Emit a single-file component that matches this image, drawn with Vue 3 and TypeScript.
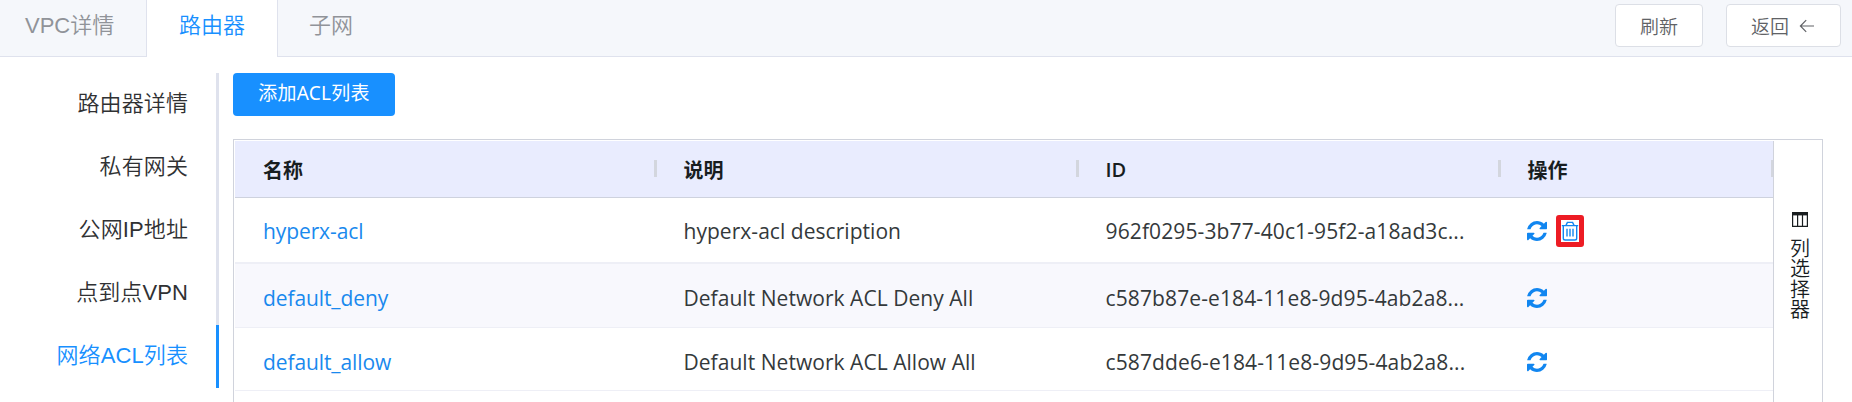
<script setup lang="ts">
interface Tab { label: string; active?: boolean }
interface AclRow { name: string; description: string; id: string; removable: boolean; size: string }

const tabs: Tab[] = [{ label: 'VPC详情' }, { label: '路由器', active: true }, { label: '子网' }]
const menu: Tab[] = [
  { label: '路由器详情' },
  { label: '私有网关' },
  { label: '公网IP地址' },
  { label: '点到点VPN' },
  { label: '网络ACL列表', active: true },
]
const columns: string[] = ['名称', '说明', 'ID', '操作']
const rows: AclRow[] = [
  { name: 'hyperx-acl', description: 'hyperx-acl description', id: '962f0295-3b77-40c1-95f2-a18ad3c...', removable: true, size: 'first' },
  { name: 'default_deny', description: 'Default Network ACL Deny All', id: 'c587b87e-e184-11e8-9d95-4ab2a8...', removable: false, size: 'striped' },
  { name: 'default_allow', description: 'Default Network ACL Allow All', id: 'c587dde6-e184-11e8-9d95-4ab2a8...', removable: false, size: 'last' },
]
</script>

<template>
  <div class="page">
    <header class="topbar">
      <div v-for="t in tabs" :key="t.label" class="tab" :class="{ active: t.active }"><span>{{ t.label }}</span></div>
      <div class="actions">
        <button class="btn refresh">刷新</button>
        <button class="btn back">
          返回
          <svg width="16" height="14" viewBox="0 0 16 14"><path d="M7.2 1.2 1.4 7l5.8 5.8M1.4 7H15" fill="none" stroke="currentColor" stroke-width="1.2" /></svg>
        </button>
      </div>
    </header>
    <div class="body">
      <nav class="menu">
        <a v-for="m in menu" :key="m.label" :class="{ active: m.active }">{{ m.label }}</a>
      </nav>
      <main class="content">
        <button class="add">添加ACL列表</button>
        <div class="grid">
          <div class="table">
            <div class="row head">
              <div v-for="c in columns" :key="c" class="cell" :class="{ latin: c === 'ID' }"><span>{{ c }}</span><i class="handle"></i></div>
            </div>
            <div v-for="r in rows" :key="r.name" class="row" :class="r.size">
              <div class="cell"><a class="name">{{ r.name }}</a></div>
              <div class="cell desc"><span>{{ r.description }}</span></div>
              <div class="cell id"><span>{{ r.id }}</span></div>
              <div class="cell ops">
                <svg class="sync" viewBox="0 0 1536 1536"><path fill="currentColor" d="M1511 928q0 5-1 7-64 268-268 434.5t-478 166.5q-146 0-282.5-55t-243.5-157l-129 129q-19 19-45 19t-45-19-19-45v-448q0-26 19-45t45-19h448q26 0 45 19t19 45-19 45l-137 137q71 66 161 102t187 36q134 0 250-65t186-179q11-17 53-117 8-23 30-23h192q13 0 22.5 9.5t9.5 22.5zm25-800v448q0 26-19 45t-45 19h-448q-26 0-45-19t-19-45 19-45l138-138q-148-137-349-137-134 0-250 65t-186 179q-11 17-53 117-8 23-30 23h-199q-13 0-22.5-9.5t-9.5-22.5v-7q65-268 270-434.5t480-166.5q146 0 284 55.5t245 156.5l130-129q19-19 45-19t45 19 19 45z" /></svg>
                <span v-if="r.removable" class="marked">
                  <svg width="18" height="20" viewBox="0 0 18 20" fill="none" stroke="currentColor" stroke-width="1.4"><path d="M.8 4.6h16.4M5 4.4 6.4 1.4h5.2L13 4.4M2.3 4.8v12.4q0 1.8 1.8 1.8h9.8q1.8 0 1.8-1.8V4.8M6 7.8v7.8M9 7.8v7.8M12 7.8v7.8" /></svg>
                </span>
              </div>
            </div>
          </div>
          <aside class="picker">
            <svg width="16" height="15" viewBox="0 0 16 15"><path d="M0 0h16v3.4H0z" fill="#181d1f" /><path d="M.6 3v11.4h14.8V3M5.6 3v11M10.5 3v11" fill="none" stroke="#181d1f" stroke-width="1.2" /></svg>
            <span>列选择器</span>
          </aside>
        </div>
      </main>
    </div>
  </div>
</template>

<style>
body { margin: 0; background: #fff; overflow: hidden; }
</style>

<style scoped>
* { box-sizing: border-box; }
.page { width: 1852px; height: 402px; overflow: hidden; background: #fff; color: #303133; font-family: "Liberation Sans", "Noto Sans CJK SC", sans-serif; }
.topbar { display: flex; height: 57px; background: #f5f7fb; border-bottom: 1px solid #dfe2ed; }
.tab { height: 57px; padding: 7px 32px 0; font-size: 22px; line-height: 38px; font-weight: 350; color: #909399; white-space: nowrap; }
.tab:first-child { width: 146px; padding-left: 25px; }
.tab.active { width: 132px; color: #1890ff; background: #fff; border: solid #dfe2ed; border-width: 0 1px; }
.tab:not(.active):not(:first-child) { padding-left: 31px; }
.actions { display: flex; gap: 23px; margin-left: auto; padding: 4px 11px 0 0; }
.btn { display: flex; align-items: center; height: 43px; padding: 0 24px; border: 1px solid #dcdfe6; border-radius: 4px; background: #fff; color: #606266; font: 350 19px "Noto Sans CJK SC", sans-serif; white-space: nowrap; }
.refresh { width: 88px; }
.back { width: 115px; }
.back svg { margin-left: 10px; flex: none; }
.body { display: flex; padding-top: 16px; }
.menu { width: 219px; height: 315px; flex: none; font-size: 22px; font-weight: 350; }
.menu a { display: block; height: 63px; line-height: 62px; padding-right: 28px; border-right: 3px solid #dfe2ed; text-align: right; letter-spacing: 0.1px; }
.menu a.active { color: #1890ff; border-color: #1890ff; }
.content { margin-left: 14px; width: 1590px; }
.add { display: block; width: 162px; height: 43px; padding: 0 0 2px; border: 0; border-radius: 4px; background: #1890ff; color: #fff; font: 400 19px "Noto Sans", "Noto Sans CJK SC", sans-serif; line-height: 39px; letter-spacing: 0.25px; }
.grid { display: flex; margin-top: 23px; height: 300px; padding: 1px 0 0 1px; border: 1px solid #d0d3dc; font-family: "Open Sans", "Noto Sans CJK SC", sans-serif; color: #181d1f; }
.table { width: 1538px; flex: none; overflow: hidden; }
.row { display: grid; grid-template-columns: 420.5px 422px 422px 1fr; height: 64px; border-bottom: 1px solid #eeeff6; color: #34393b; font-size: 21px; font-weight: 400; }
.cell { position: relative; display: flex; align-items: center; padding-left: 28px; white-space: nowrap; }
.row.head { height: 57px; background: #e9ecfe; border-bottom-color: #ced2de; color: #181d1f; font-size: 20px; font-weight: 700; }
.latin { font-weight: 600; }
.handle { position: absolute; right: -1px; top: 19px; width: 3px; height: 17px; background: #d3d6de; }
.first { height: 66px; padding-top: 1px; border-bottom-width: 2px; }
.striped { height: 64px; padding-top: 4px; background: #f8f8fd; }
.last { height: 63px; padding-top: 5px; }
.name { color: #1989ee; letter-spacing: -0.1px; }
.desc { letter-spacing: 0.04px; }
.id { letter-spacing: 0.12px; }
.ops { padding-left: 27px; color: #1186f0; }
.sync { width: 20px; height: 20px; flex: none; }
.marked { display: flex; align-items: center; justify-content: center; width: 28px; height: 32px; margin-left: 9px; border: 5px solid #ed1c24; border-radius: 3px; }
.marked svg { flex: none; }
.picker { display: flex; flex: 1; flex-direction: column; align-items: center; padding-top: 71px; border-left: 1px solid #d0d3dc; padding-left: 4px; }
.picker span { margin-top: 11px; width: 20px; font: 350 20px/20.4px "Noto Sans CJK SC", sans-serif; word-break: break-all; }
</style>
